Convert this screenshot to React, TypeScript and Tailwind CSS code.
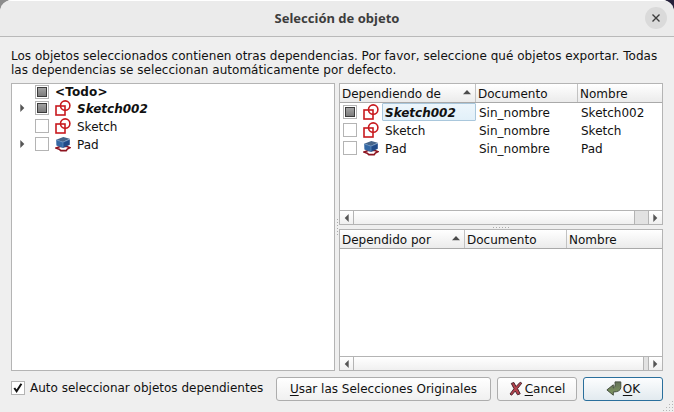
import type { ReactNode } from 'react';

type CheckState = 'on' | 'off' | 'partial';

function Check({ state }: { state: CheckState }) {
  return (
    <span className="flex h-[14px] w-[14px] shrink-0 items-center justify-center border border-[#b4b4b4] bg-white">
      {state === 'partial' && (
        <span className="h-[10px] w-[10px] border border-[#3c3c3c] bg-linear-to-b from-[#a2a2a2] to-[#7c7c7c]" />
      )}
      {state === 'on' && (
        <svg width="12" height="12" viewBox="0 0 12 12" fill="none" stroke="#111" strokeWidth="2">
          <path d="M2.3 6 L4.6 9.3 L9.4 1.8" />
        </svg>
      )}
    </span>
  );
}

function SketchIcon() {
  return (
    <svg className="shrink-0" width="16" height="16" viewBox="0 0 16 16" fill="none" stroke="#c81a1e" strokeWidth="1.6">
      <rect x="1" y="6" width="9" height="9" />
      <circle cx="10.2" cy="5.6" r="4.7" />
    </svg>
  );
}

function PadIcon() {
  return (
    <svg className="shrink-0" width="16" height="16" viewBox="0 0 16 16">
      <path d="M1.2 12 L5 10.5 H12 L14.8 11.7 L12.3 13 L11.2 14.6 H5.8 L4.2 13.2 Z" fill="#fff" stroke="#8d1420" strokeWidth="1.6" />
      <path d="M1.2 3.8 L8 6 V12 L1.4 9.6 Z" fill="#3468a4" />
      <path d="M8 6 L14.8 3.2 V8.8 L8 12 Z" fill="#204a87" />
      <path d="M1.2 3.8 L8.3 1 L14.8 2.8 L8 6 Z" fill="#46658a" />
      <path d="M1.4 4 L8 6.3 L14.5 3.4 M8 6.3 V11.8" fill="none" stroke="#6a97c8" strokeWidth=".6" />
    </svg>
  );
}

function Tri({ dir, className = '' }: { dir: 'left' | 'right' | 'up'; className?: string }) {
  if (dir === 'up')
    return (
      <svg className={className} width="8" height="5" viewBox="0 0 8 5">
        <path d="M4 0 L8 4.3 H0 Z" fill="#4c4c4c" />
      </svg>
    );
  return (
    <svg className={className} width="5" height="8" viewBox="0 0 5 8">
      <path d={dir === 'right' ? 'M0.3 0 L4.3 4 L0.3 8 Z' : 'M4.7 0 L0.7 4 L4.7 8 Z'} fill="#555" />
    </svg>
  );
}

function TreeRow({ label, state, icon, arrow, bold }: { label: string; state: CheckState; icon: ReactNode; arrow?: boolean; bold?: boolean }) {
  return (
    <div className="flex h-[18px] items-center">
      <span className="flex w-[23px] shrink-0 pl-[8px]">{arrow && <Tri dir="right" />}</span>
      <Check state={state} />
      <span className="ml-[6px] flex">{icon}</span>
      <span className={bold ? 'ml-[6px] pt-[2px] leading-[16px] font-bold italic' : 'ml-[6px] pt-[2px] leading-[16px]'}>{label}</span>
    </div>
  );
}

function Header({ first, cols }: { first: string; cols: string }) {
  return (
    <div className={`grid h-[19px] shrink-0 border-b border-[#a9a9a9] bg-linear-to-b from-white to-[#ebebeb] leading-[20px] ${cols}`}>
      <div className="flex h-[18px] justify-between border-r border-[#c2c2c2] pl-[2px]">
        {first}
        <Tri dir="up" className="mt-[6px] mr-[4px]" />
      </div>
      <div className="h-[18px] border-r border-[#c2c2c2] pl-[2px]">Documento</div>
      <div className="h-[18px] pl-[2px]">Nombre</div>
    </div>
  );
}

function TableRow({ label, state, icon, selected }: { label: string; state: CheckState; icon: ReactNode; selected?: boolean }) {
  return (
    <div className="grid h-[18px] grid-cols-[136px_102px_1fr] leading-[20px]">
      <div className="flex h-[18px] items-center pl-[3px]">
        <Check state={state} />
        <span className="ml-[6px] flex">{icon}</span>
        <span
          className={
            selected
              ? 'ml-[3px] h-[18px] flex-1 rounded-[1px] border border-[#a9c7dc] bg-linear-to-b from-[#edf6fc] to-[#e2f0f9] pl-[2px] leading-[18px] font-bold italic'
              : 'ml-[6px] h-[18px]'
          }
        >
          {label}
        </span>
      </div>
      <div className="pl-[3px]">Sin_nombre</div>
      <div className="pl-[3px]">{label}</div>
    </div>
  );
}

function ScrollBar({ restClass }: { restClass: string }) {
  return (
    <div className="mt-auto flex h-[14px] shrink-0 border-t border-[#b4b4b4] bg-linear-to-b from-white to-[#f0f0f0]">
      <div className="flex w-[14px] items-center justify-center border-r border-[#b4b4b4] pr-px">
        <Tri dir="left" />
      </div>
      <div className="flex-1" />
      <div className={`border-x border-[#b4b4b4] bg-[#e2e2e2] ${restClass}`} />
      <div className="flex w-[13px] items-center justify-center pr-px">
        <Tri dir="right" />
      </div>
    </div>
  );
}

function Dots({ vertical }: { vertical?: boolean }) {
  return (
    <div className={`flex ${vertical ? 'flex-col' : ''} gap-[2px]`}>
      {[0, 1, 2, 3, 4, 5].map((i) => (
        <span key={i} className="h-px w-px bg-[#aaa]" />
      ))}
    </div>
  );
}

const button = 'flex h-[24px] items-center justify-center rounded-[3px] border bg-linear-to-b';

export default function App() {
  return (
    <div className="h-[412px] w-[674px] overflow-hidden bg-[linear-gradient(90deg,#8c8c8c_50%,#25203a_50%)] font-['DejaVu_Sans',sans-serif] text-[12px] whitespace-nowrap text-[#111]">
      <div className="flex h-full flex-col overflow-hidden rounded-t-[12px] bg-[#efefef]">
        <header className="grid h-[37px] shrink-0 grid-cols-[36px_1fr_36px] items-center border-t border-b border-t-white border-b-[#b9b9b9] bg-[#ebebeb]">
          <span />
          <h1 className="text-center font-['Noto_Sans',sans-serif] text-[13px] font-bold text-[#3d3d3d]">Selección de objeto</h1>
          <button className="mb-px ml-[7px] flex h-[22px] w-[22px] items-center justify-center rounded-full bg-[#dadada]">
            <svg width="8" height="8" viewBox="0 0 8 8" stroke="#3d3d3d" strokeWidth="1.4">
              <path d="M.5 .5 L7.5 7.5 M7.5 .5 L.5 7.5" />
            </svg>
          </button>
        </header>

        <p className="mt-[12px] ml-[11px] h-[34px] leading-[14px] tracking-[0.028px]">
          Los objetos seleccionados contienen otras dependencias. Por favor, seleccione qué objetos exportar. Todas
          <br />
          las dependencias se seleccionan automáticamente por defecto.
        </p>

        <main className="ml-[11px] flex h-[288px] w-[652px]">
          <section className="w-[324px] border border-[#b4b4b4] bg-white">
            <div className="flex h-[15px] items-center pl-[23px]">
              <Check state="partial" />
              <span className="ml-[6px] font-bold tracking-[0.15px]">&lt;Todo&gt;</span>
            </div>
            <TreeRow label="Sketch002" state="partial" icon={<SketchIcon />} arrow bold />
            <TreeRow label="Sketch" state="off" icon={<SketchIcon />} />
            <TreeRow label="Pad" state="off" icon={<PadIcon />} arrow />
          </section>
          <div className="flex w-[4px] items-center justify-center">
            <Dots vertical />
          </div>
          <div className="flex w-[324px] flex-col">
            <section className="flex h-[142px] flex-col border border-[#b4b4b4] bg-white">
              <Header first="Dependiendo de" cols="grid-cols-[136px_102px_1fr]" />
              <TableRow label="Sketch002" state="partial" icon={<SketchIcon />} selected />
              <TableRow label="Sketch" state="off" icon={<SketchIcon />} />
              <TableRow label="Pad" state="off" icon={<PadIcon />} />
              <ScrollBar restClass="w-[15px]" />
            </section>
            <div className="flex h-[4px] items-center justify-center">
              <Dots />
            </div>
            <section className="flex h-[142px] flex-col border border-[#b4b4b4] bg-white">
              <Header first="Dependido por" cols="grid-cols-[125px_102px_1fr]" />
              <ScrollBar restClass="w-[6px]" />
            </section>
          </div>
        </main>

        <footer className="mt-[6px] ml-[11px] flex h-[35px] w-[663px]">
          <label className="flex h-[22px] w-[265px] items-center">
            <Check state="on" />
            <span className="ml-[5px]">Auto seleccionar objetos dependientes</span>
          </label>
          <button className={`${button} w-[215px] border-[#adadad] from-white to-[#f0f0f0]`}>
            <span><u className="underline-offset-2">U</u>sar las Selecciones Originales</span>
          </button>
          <button className={`${button} ml-[6px] w-[80px] border-[#adadad] from-white to-[#f0f0f0]`}>
            <svg className="mr-[2px]" width="14" height="16" viewBox="0 0 14 16">
              <path d="M2.3 2.4 L4.9 1.5 L7 5.6 L11.2 1.2 L12.8 2.2 L8.5 7.6 L11.2 12.8 L8.5 13.8 L6.3 10 L2.6 14.2 L1 13 L5 7.7 Z" fill="#b5424c" stroke="#4b2730" strokeWidth="1" />
            </svg>
            <span><u className="underline-offset-2">C</u>ancel</span>
          </button>
          <button className={`${button} ml-[6px] w-[80px] border-[#2a6f9c] from-[#fcfdfe] to-[#e2eaef]`}>
            <svg className="mr-px" width="16" height="16" viewBox="0 0 16 16">
              <defs>
                <linearGradient id="arrowFill" x1="0" y1="0" x2="0" y2="1">
                  <stop offset="0" stopColor="#64725a" />
                  <stop offset="1" stopColor="#80995f" />
                </linearGradient>
              </defs>
              <path d="M9 .9 H14.8 V6.7 Q14.4 10.8 7.3 11 V14.2 L.9 8.9 L7.3 3.8 V7 Q9.6 6.5 9 .9 Z" fill="url(#arrowFill)" stroke="#465040" strokeWidth="1" />
            </svg>
            <span><u className="underline-offset-2">O</u>K</span>
          </button>
          <svg className="mt-auto" width="11" height="11" viewBox="0 0 11 11" fill="#b5b5b5">
            <path d="M9 0h1v1h-1zM6 3h1v1h-1zM9 3h1v1h-1zM3 6h1v1h-1zM6 6h1v1h-1zM9 6h1v1h-1zM0 9h1v1h-1zM3 9h1v1h-1zM6 9h1v1h-1zM9 9h1v1h-1z" />
          </svg>
        </footer>
      </div>
    </div>
  );
}
